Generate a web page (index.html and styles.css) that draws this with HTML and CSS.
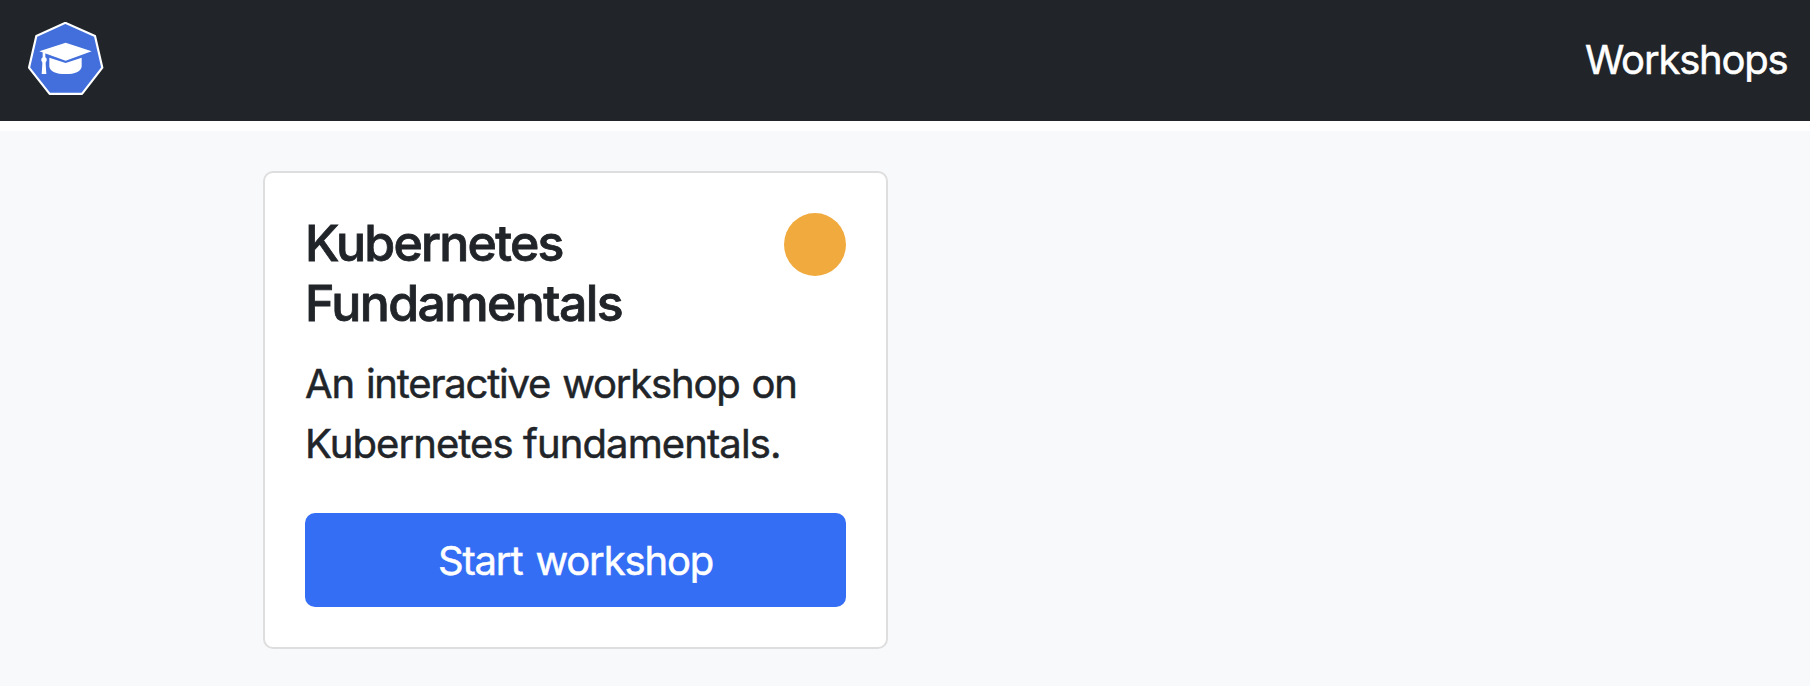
FILE: index.html
```html
<!DOCTYPE html>
<html lang="en">
<head>
<meta charset="utf-8">
<title>Workshops</title>
<link rel="stylesheet" href="styles.css">
</head>
<body>
<nav class="navbar">
  <a class="brand" aria-label="Home">
    <svg class="logo" viewBox="36 36 228 228">
      <path d="M148 38.500L237 78L259 173L198 251.500H101L39 173L61 78Z" fill="#426fdc" stroke="#fff" stroke-width="6.500" stroke-linejoin="round"/>
      <path d="M149 98L227 124L149 152L70 124Z" fill="#fff"/>
      <path d="M100 143L149 159L197 143V170Q192 192 149 192Q105 192 100 170Z" fill="#fff"/>
      <path d="M80 127H88V142Q94 145 92 152Q88 156 89 161L91 192H77L79 161Q80 156 76 152Q74 146 80 142Z" fill="#fff"/>
    </svg>
  </a>
  <a class="nav-link">Workshops</a>
</nav>
<main class="content">
  <article class="card">
    <header class="card-header">
      <h5 class="card-title"><span class="title-first">Kubernetes</span> <span class="title-second">Fundamentals</span></h5>
      <span class="status"></span>
    </header>
    <p class="card-text">An interactive workshop on <span class="text-second">Kubernetes fundamentals.</span></p>
    <button class="button">Start workshop</button>
  </article>
</main>
</body>
</html>
```
FILE: styles.css
```css
body {
  margin: 0;
  min-height: 686px;
  display: flex;
  flex-direction: column;
  overflow: hidden;
  background: #fff;
  color: #212529;
  font-family: Inter, "Liberation Sans", sans-serif;
  font-size: 40px;
  line-height: 60px;
  -webkit-text-stroke: 0.5px currentColor;
}

.navbar {
  box-sizing: border-box;
  height: 121px;
  padding: 0 22.500px 2px 28px;
  display: flex;
  align-items: center;
  justify-content: space-between;
  background: #212529;
}

.brand,
.logo {
  display: block;
}

.logo {
  width: 76px;
  height: 76px;
}

.nav-link {
  color: #fff;
  letter-spacing: -1.200px;
}

.content {
  flex: 1;
  box-sizing: border-box;
  margin-top: 10px;
  padding: 40px 263px 0;
  background: #f8f9fb;
}

.card {
  box-sizing: border-box;
  width: 625px;
  padding: 40px;
  border: 2px solid #dedede;
  border-radius: 10px;
  background: #fff;
}

.card-header {
  display: flex;
  align-items: flex-start;
  justify-content: space-between;
}

.card-title {
  margin: 0 0 21px;
  width: 400px;
  font-size: 50px;
  font-weight: 500;
  letter-spacing: -1.750px;
  -webkit-text-stroke-width: 0.8px;
}

.title-second {
  letter-spacing: -1.600px;
}

.status {
  width: 62px;
  height: 63px;
  border-radius: 50%;
  background: #f1aa3d;
}

.card-text {
  margin: 0 0 39px;
  white-space: nowrap;
  letter-spacing: -1.200px;
  word-spacing: 2px;
}

.text-second {
  display: block;
  letter-spacing: -0.900px;
  word-spacing: 0;
}

.button {
  display: block;
  width: 100%;
  height: 94px;
  padding: 2px 0 0;
  border: 0;
  border-radius: 10px;
  background: #346ef5;
  color: #fff;
  font: inherit;
  letter-spacing: -1.150px;
  word-spacing: 3px;
}
```
